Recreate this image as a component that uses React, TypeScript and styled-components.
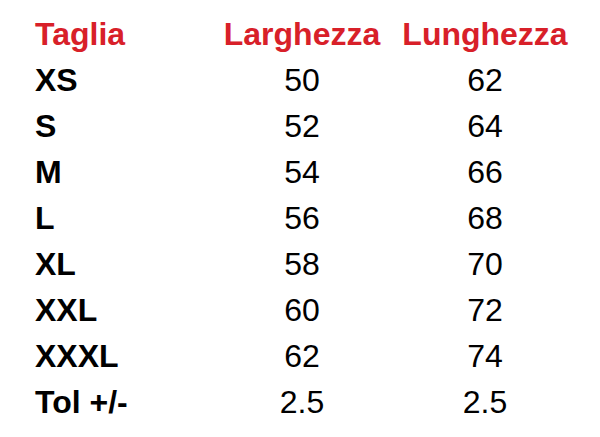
import { Fragment } from 'react';
import styled, { createGlobalStyle } from 'styled-components';

const GlobalStyle = createGlobalStyle`
  html, body {
    margin: 0;
    padding: 0;
    background: #fff;
  }
  body {
    font-family: 'Liberation Sans', Arial, Helvetica, sans-serif;
  }
`;

const Page = styled.div`
  width: 600px;
  height: 437px;
  background: #fff;
  padding: 10.6px 0 0 35px;
  box-sizing: border-box;
  overflow: hidden;
`;

const Table = styled.div`
  display: grid;
  grid-template-columns: 179px 176px 190px;
  grid-auto-rows: 46.1px;
  font-size: 32px;
  line-height: 46.1px;
  color: #000;
`;

const Head = styled.div<{ $center?: boolean }>`
  color: #d82029;
  font-weight: 700;
  white-space: nowrap;
  text-align: ${({ $center }) => ($center ? 'center' : 'left')};
`;

const Size = styled.div`
  font-weight: 700;
  white-space: nowrap;
`;

const Value = styled.div`
  text-align: center;
  font-weight: 400;
`;

const rows = [
  { size: 'XS', width: '50', length: '62' },
  { size: 'S', width: '52', length: '64' },
  { size: 'M', width: '54', length: '66' },
  { size: 'L', width: '56', length: '68' },
  { size: 'XL', width: '58', length: '70' },
  { size: 'XXL', width: '60', length: '72' },
  { size: 'XXXL', width: '62', length: '74' },
  { size: 'Tol +/-', width: '2.5', length: '2.5' },
];

function App() {
  return (
    <>
      <GlobalStyle />
      <Page>
        <Table>
          <Head>Taglia</Head>
          <Head $center>Larghezza</Head>
          <Head $center>Lunghezza</Head>
          {rows.map((r) => (
            <Fragment key={r.size}>
              <Size>{r.size}</Size>
              <Value>{r.width}</Value>
              <Value>{r.length}</Value>
            </Fragment>
          ))}
        </Table>
      </Page>
    </>
  );
}

export default App;
